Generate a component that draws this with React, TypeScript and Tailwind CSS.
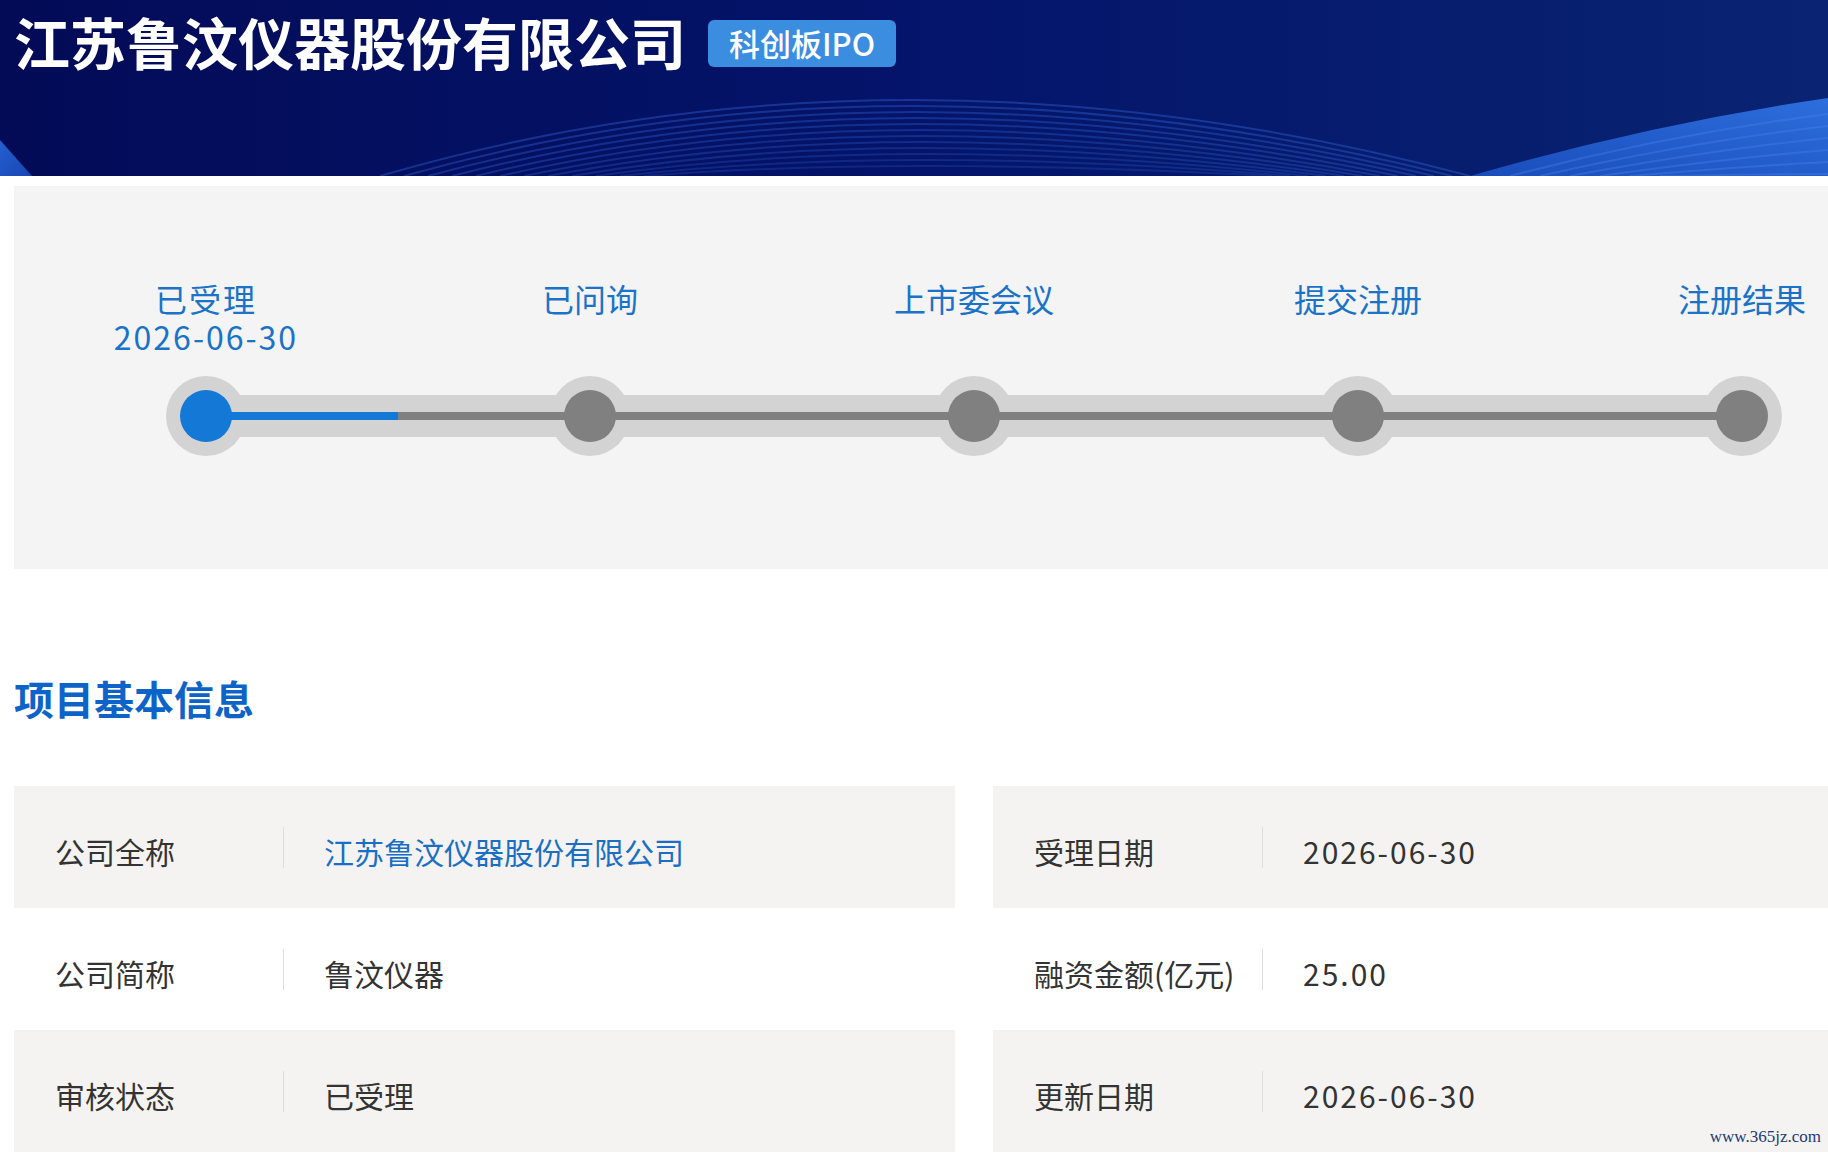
import React from "react";

const steps = [
  { name: "已受理", date: "2026-06-30" },
  { name: "已问询", date: "" },
  { name: "上市委会议", date: "" },
  { name: "提交注册", date: "" },
  { name: "注册结果", date: "" },
];

const infoRows = [
  [
    { label: "公司全称", value: "江苏鲁汶仪器股份有限公司", link: true },
    { label: "受理日期", value: "2026-06-30", num: true },
  ],
  [
    { label: "公司简称", value: "鲁汶仪器" },
    { label: "融资金额(亿元)", value: "25.00", num: true },
  ],
  [
    { label: "审核状态", value: "已受理" },
    { label: "更新日期", value: "2026-06-30", num: true },
  ],
];

const HeaderWaves: React.FC = () => {
  const arcs = Array.from({ length: 12 }, (_, k) => k);
  return (
    <svg
      className="absolute inset-0"
      width="1828"
      height="176"
      viewBox="0 0 1828 176"
      preserveAspectRatio="none"
    >
      <defs>
        <linearGradient id="streak" x1="0" y1="1" x2="1" y2="0">
          <stop offset="0" stopColor="#1c52c4" stopOpacity="0.9" />
          <stop offset="1" stopColor="#2f72e2" stopOpacity="0.95" />
        </linearGradient>
        <linearGradient id="corner" x1="0" y1="0" x2="1" y2="1">
          <stop offset="0" stopColor="#2460d2" />
          <stop offset="1" stopColor="#1845b0" />
        </linearGradient>
      </defs>
      {arcs.map((k) => (
        <path
          key={k}
          d={`M ${380 + k * 24} 176 Q 900 ${24 + k * 12} ${1470 - k * 18} 176`}
          fill="none"
          stroke="#2f63d6"
          strokeOpacity={0.42 - k * 0.015}
          strokeWidth="2"
        />
      ))}
      <path d="M 1470 176 Q 1650 124 1828 98 L 1828 176 Z" fill="url(#streak)" />
      {arcs.slice(0, 6).map((k) => (
        <path
          key={`s${k}`}
          d={`M ${1510 + k * 30} 176 Q ${1670 + k * 20} ${134 + k * 8} 1828 ${114 + k * 12}`}
          fill="none"
          stroke="#4a88ee"
          strokeOpacity="0.35"
          strokeWidth="2"
        />
      ))}
      <path d="M 0 140 L 32 176 L 0 176 Z" fill="url(#corner)" />
    </svg>
  );
};

const StepItem: React.FC<{ index: number; name: string; date: string }> = ({
  index,
  name,
  date,
}) => {
  const active = index === 0;
  return (
    <div className="flex flex-col items-center">
      <div
        className={`h-[97px] text-center whitespace-pre-line text-[32px] leading-[38px] text-[#1a73c8] ${
          date ? "tracking-[2px]" : ""
        }`}
      >
        {date ? `${name}\n${date}` : name}
      </div>
      <div className="relative w-full h-[80px] flex items-center justify-center">
        <div className="absolute left-1/2 top-0 -ml-[40px] w-[80px] h-[80px] rounded-full bg-[#d3d3d3]" />
        {index > 0 && (
          <div className="absolute left-0 right-1/2 top-[19px] h-[42px] bg-[#d3d3d3] flex items-center">
            <div className="w-full h-2 bg-[#808080]" />
          </div>
        )}
        {index < steps.length - 1 && (
          <div className="absolute left-1/2 right-0 top-[19px] h-[42px] bg-[#d3d3d3] flex items-center">
            <div
              className={`w-full h-2 ${active ? "bg-[#1479d6]" : "bg-[#808080]"}`}
            />
          </div>
        )}
        <div
          className={`relative w-[52px] h-[52px] rounded-full ${
            active ? "bg-[#1479d6]" : "bg-[#808080]"
          }`}
        />
      </div>
    </div>
  );
};

const App: React.FC = () => {
  return (
    <div
      className="relative w-[1828px] h-[1154px] overflow-hidden bg-white"
      style={{ fontFamily: '"Noto Sans CJK SC", "Noto Sans", sans-serif' }}
    >
      <header className="relative h-[176px] bg-gradient-to-r from-[#030b57] via-[#04146a] to-[#0a2372]">
        <HeaderWaves />
        <div className="relative flex items-center gap-[22px] pl-[14px] pt-[5px]">
          <h1 className="text-[56px] leading-[72px] font-bold text-white">
            江苏鲁汶仪器股份有限公司
          </h1>
          <span className="mt-[5px] h-[47px] px-[21px] flex items-center rounded-[6px] bg-[#3a8ddf] text-white text-[31px] font-medium">
            科创板IPO
          </span>
        </div>
      </header>

      <div className="ml-[14px] w-[1920px]">
        <section className="mt-[10px] h-[383px] pt-[93px] bg-[#f4f4f4] grid grid-cols-5">
          {steps.map((s, i) => (
            <StepItem key={s.name} index={i} name={s.name} date={s.date} />
          ))}
        </section>

        <h2 className="mt-[105px] text-[40px] leading-[48px] font-bold text-[#0d63c8]">
          项目基本信息
        </h2>

        <div className="mt-[64px] flex flex-col">
          {infoRows.map((row, r) => (
            <div key={r} className="grid grid-cols-2 gap-x-[38px]">
              {row.map((cell) => (
                <div
                  key={cell.label}
                  className={`h-[122px] flex items-center ${
                    r % 2 === 0 ? "bg-[#f4f3f2]" : "bg-white"
                  }`}
                >
                  <span className="w-[228px] ml-[41px] mt-[8px] text-[30px] text-[#333333] whitespace-nowrap">
                    {cell.label}
                  </span>
                  <span className="w-px h-[41px] bg-[#dddddd]" />
                  <span
                    className={`ml-[40px] mt-[8px] text-[30px] ${
                      cell.link ? "text-[#1a6fc4]" : "text-[#333333]"
                    } ${cell.num ? "tracking-[2px]" : ""}`}
                  >
                    {cell.value}
                  </span>
                </div>
              ))}
            </div>
          ))}
        </div>
      </div>

      <span
        className="absolute right-[7px] bottom-[5px] text-[17px] text-[#1b3a73]"
        style={{ fontFamily: '"Liberation Serif", serif' }}
      >
        www.365jz.com
      </span>
    </div>
  );
};

export default App;
